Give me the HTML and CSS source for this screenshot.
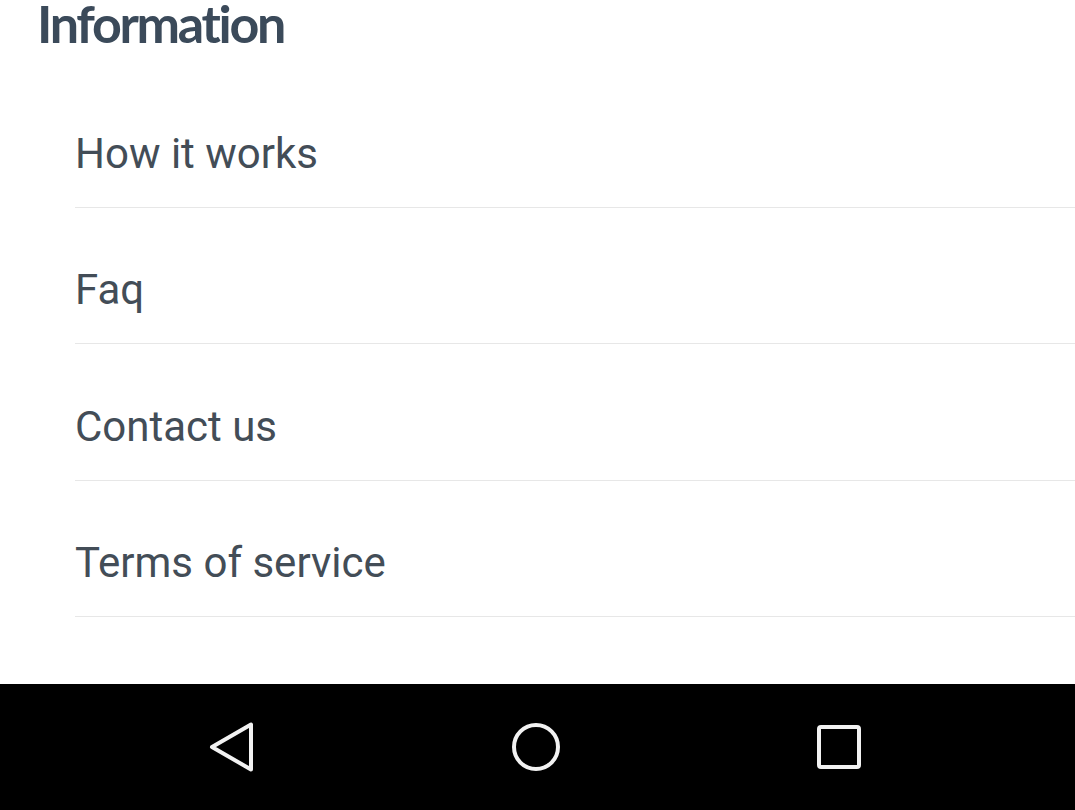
FILE: index.html
```html
<!DOCTYPE html>
<html>
<head>
<meta charset="utf-8">
<link rel="stylesheet" href="styles.css">
</head>
<body>
<div class="page">
  <header class="head"><h1 class="title">Information</h1></header>
  <ul class="menu">
    <li class="item h136"><span class="label">How it works</span></li>
    <li class="item h136"><span class="label">Faq</span></li>
    <li class="item h137"><span class="label">Contact us</span></li>
    <li class="item h136"><span class="label">Terms of service</span></li>
  </ul>
  <div class="spacer"></div>
  <nav class="navbar">
    <div class="cell">
      <svg width="60" height="60" viewBox="0 0 60 60"><path d="M10 30 L49 7.5 L49 52.5 Z" fill="none" stroke="#f2f2f2" stroke-width="4" stroke-linejoin="round"/></svg>
    </div>
    <div class="cell">
      <svg width="60" height="60" viewBox="0 0 60 60"><circle cx="30" cy="30" r="22" fill="none" stroke="#f2f2f2" stroke-width="4"/></svg>
    </div>
    <div class="cell">
      <svg width="60" height="60" viewBox="0 0 60 60"><rect x="10" y="10" width="40" height="40" rx="2" fill="none" stroke="#f2f2f2" stroke-width="4"/></svg>
    </div>
  </nav>
</div>
</body>
</html>
```
FILE: styles.css
```css
html, body {
  margin: 0;
  padding: 0;
  background: #ffffff;
}
.page {
  width: 1075px;
  height: 810px;
  display: flex;
  flex-direction: column;
  overflow: hidden;
}
.head {
  height: 72px;
  box-sizing: border-box;
  padding-left: 37px;
}
.title {
  margin: 0;
  font-family: "Lato", sans-serif;
  font-weight: 700;
  font-size: 52px;
  line-height: 46px;
  letter-spacing: -2.3px;
  color: #3b4a5a;
}
.menu {
  list-style: none;
  margin: 0;
  padding: 0 0 0 75px;
}
.item {
  box-sizing: border-box;
  border-bottom: 1px solid #e7e7e7;
  padding-top: 61px;
}
.h136 { height: 136px; }
.h137 { height: 137px; padding-top: 62px; }
.label {
  display: block;
  font-family: "Roboto", sans-serif;
  font-size: 42px;
  line-height: 42px;
  color: #434d57;
}
.spacer {
  flex: 1;
}
.navbar {
  height: 126px;
  background: #000000;
  display: flex;
  align-items: center;
  justify-content: space-between;
  padding: 0 166px 0 162px;
}
.cell {
  width: 140px;
  display: flex;
  justify-content: center;
  align-items: center;
}
.cell svg {
  display: block;
}
```
